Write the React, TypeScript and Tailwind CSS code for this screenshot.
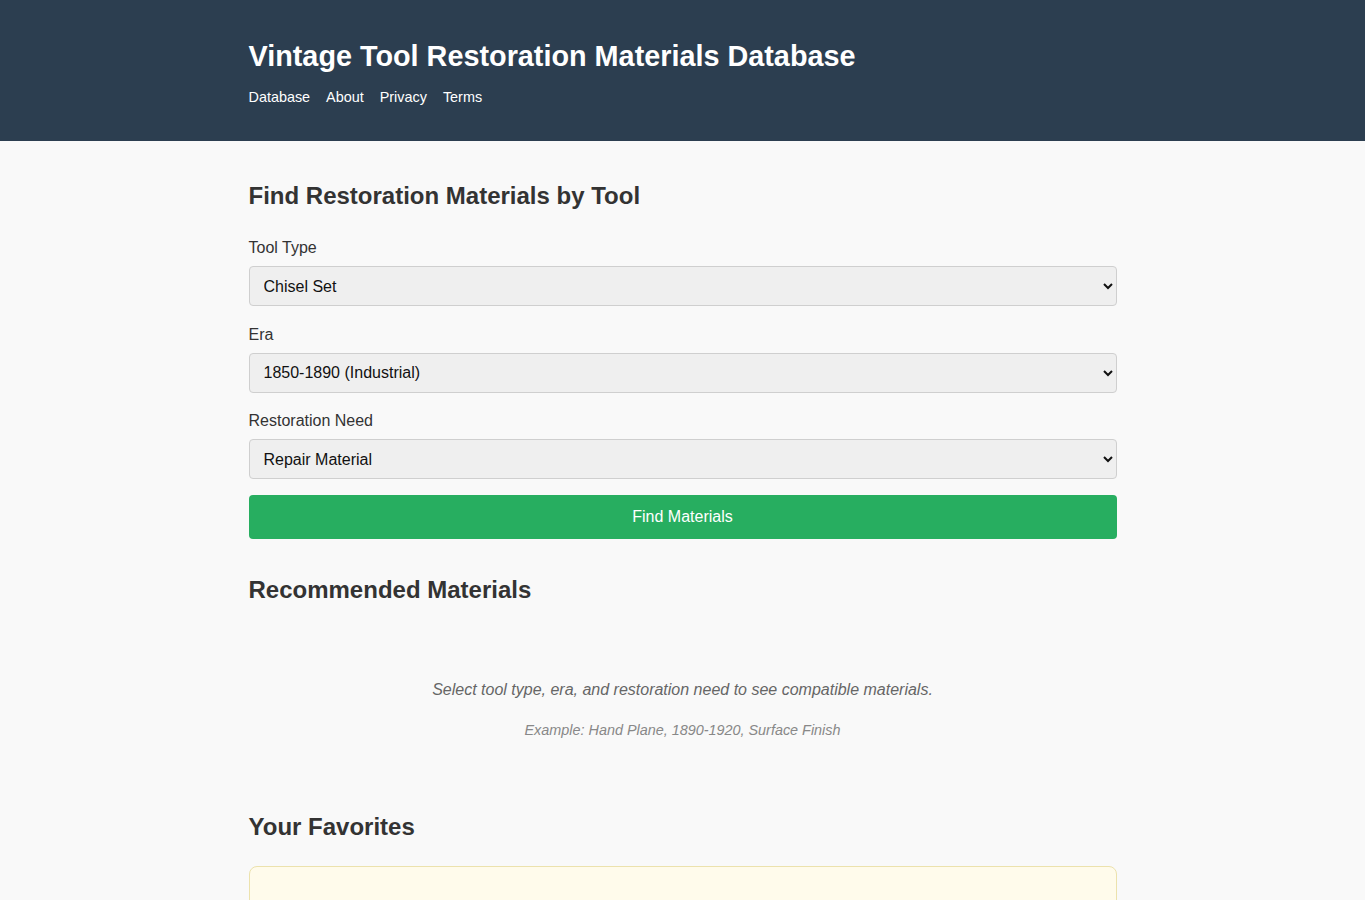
import React, { useState } from 'react';

const toolTypes = ['Chisel Set', 'Hand Plane', 'Hand Saw', 'Brace & Bit', 'Spokeshave', 'Drawknife'];
const eras = ['1850-1890 (Industrial)', '1890-1920', '1920-1950', '1950-1970'];
const needs = ['Repair Material', 'Surface Finish', 'Rust Removal', 'Handle Replacement', 'Sharpening'];

const font = { fontFamily: '"Liberation Sans", Arial, sans-serif' };

type FieldProps = {
  label: string;
  value: string;
  options: string[];
  onChange: (v: string) => void;
};

const Field: React.FC<FieldProps> = ({ label, value, options, onChange }) => (
  <div className="mb-[16.5px]">
    <label className="block text-base leading-6 mb-1.5 text-[#333]">{label}</label>
    <select
      value={value}
      onChange={(e) => onChange(e.target.value)}
      className="block w-full h-10 pl-[10px] pr-3 text-base text-[#111] bg-[#efefef] border border-[#cfcfcf] rounded"
    >
      {options.map((o) => (
        <option key={o}>{o}</option>
      ))}
    </select>
  </div>
);

export default function App() {
  const [tool, setTool] = useState(toolTypes[0]);
  const [era, setEra] = useState(eras[0]);
  const [need, setNeed] = useState(needs[0]);

  const navLinks = ['Database', 'About', 'Privacy', 'Terms'];

  return (
    <div className="min-h-screen bg-[#f9f9f9] text-[#333]" style={font}>
      <header className="bg-[#2c3e50] text-white pt-10 pb-[36px]">
        <div className="max-w-[900px] mx-auto px-4">
          <h1 className="text-[1.8rem] leading-8 font-bold mb-[17px]">Vintage Tool Restoration Materials Database</h1>
          <nav className="flex gap-4 text-[0.9rem] leading-4">
            {navLinks.map((name) => (
              <a key={name} href="#" className="text-white hover:underline">
                {name}
              </a>
            ))}
          </nav>
        </div>
      </header>

      <main className="max-w-[900px] mx-auto px-4 pt-[41px]">
        <section>
          <h2 className="text-2xl leading-7 font-bold mb-[26px]">Find Restoration Materials by Tool</h2>
          <Field label="Tool Type" value={tool} options={toolTypes} onChange={setTool} />
          <Field label="Era" value={era} options={eras} onChange={setEra} />
          <Field label="Restoration Need" value={need} options={needs} onChange={setNeed} />
          <button className="w-full h-11 bg-[#27ae60] hover:bg-[#229954] text-white text-base rounded -mt-px">
            Find Materials
          </button>
        </section>

        <section className="mt-[37px]">
          <h2 className="text-2xl leading-7 font-bold">Recommended Materials</h2>
          <div className="text-center pt-[74px] pb-[60px]">
            <p className="italic text-base leading-6 text-[#666]">
              Select tool type, era, and restoration need to see compatible materials.
            </p>
            <p className="italic text-[0.9rem] leading-5 text-[#888] mt-[18px]">
              Example: Hand Plane, 1890-1920, Surface Finish
            </p>
          </div>
        </section>

        <section className="mt-[13px]">
          <h2 className="text-2xl leading-7 font-bold mb-[25px]">Your Favorites</h2>
          <div className="bg-[#fffbeb] border border-[#ece2ad] rounded-lg h-[120px]" />
        </section>
      </main>
    </div>
  );
}
